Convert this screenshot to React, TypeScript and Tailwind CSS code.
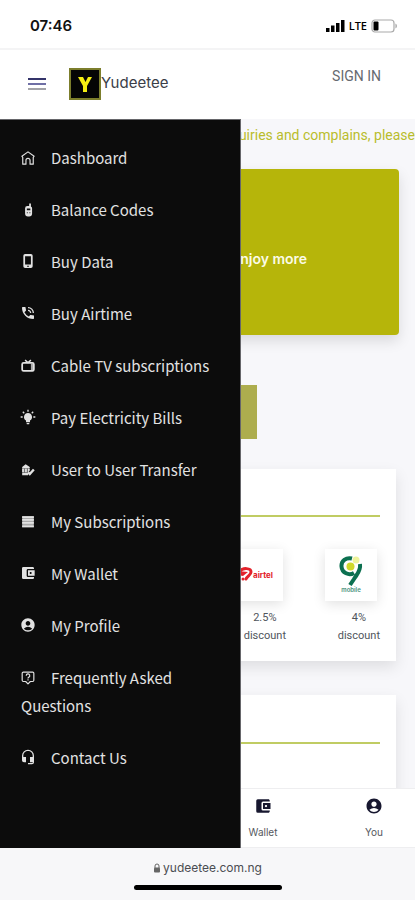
import type { ReactNode } from "react";
import { MdAccountBalanceWallet, MdAccountCircle, MdHeadsetMic, MdPhoneInTalk } from "react-icons/md";

function Glyph({ children, className = "h-3.5 w-3.5" }: { children: ReactNode; className?: string }) {
  return (
    <svg viewBox="0 0 24 24" fill="currentColor" aria-hidden="true" className={className}>
      {children}
    </svg>
  );
}

const stroke = { fill: "none", stroke: "currentColor", strokeWidth: 2 };
const padded = "-mx-px h-4 w-4";

const menu: { label: string; icon: ReactNode }[] = [
  {
    label: "Dashboard",
    icon: (
      <Glyph>
        <path {...stroke} strokeLinejoin="round" d="M3 22.500V11L1.500 9 12 1.500 22.500 9 21 11v11.500h-5.500V16a3.500 3.500 0 0 0-7 0v6.500z" />
      </Glyph>
    ),
  },
  {
    label: "Balance Codes",
    icon: (
      <Glyph>
        <path fillRule="evenodd" d="M14 1h3v5a3 3 0 0 1 2 3v9a5 5 0 0 1-5 5h-2a5 5 0 0 1-5-5V9a4 4 0 0 1 4-4h3zM10 9.500v3h6v-3zM10 16v1.500h1.500V16zm4.500 0v1.500H16V16z" />
      </Glyph>
    ),
  },
  {
    label: "Buy Data",
    icon: (
      <Glyph className="h-4 w-3.5">
        <path fillRule="evenodd" d="M7 0h10a3 3 0 0 1 3 3v18a3 3 0 0 1-3 3H7a3 3 0 0 1-3-3V3a3 3 0 0 1 3-3zM7 4v14h10V4zM10.500 20v2h3v-2z" />
      </Glyph>
    ),
  },
  { label: "Buy Airtime", icon: <MdPhoneInTalk className={padded} /> },
  {
    label: "Cable TV subscriptions",
    icon: (
      <Glyph>
        <rect {...stroke} strokeWidth={3} x="2" y="6.500" width="20" height="14" rx="2.500" />
        <path {...stroke} strokeWidth={2.500} d="M7 2l5 4 5-4" />
        <path d="M17 8h4v11h-4z" opacity=".75" />
      </Glyph>
    ),
  },
  {
    label: "Pay Electricity Bills",
    icon: (
      <Glyph className="-mx-px h-4 w-4">
        <path d="M12 6a6 6 0 0 1 3 11.200V19a1 1 0 0 1-1 1h-4a1 1 0 0 1-1-1v-1.800A6 6 0 0 1 12 6m2 15v1a1 1 0 0 1-1 1h-2a1 1 0 0 1-1-1v-1zm6-10h3v2h-3zM1 11h3v2H1zM13 1v3h-2V1zM4.900 3.500l2.200 2.200-1.500 1.400-2.100-2.200zm12 2.200 2.200-2.200 1.400 1.400-2.100 2.200z" />
      </Glyph>
    ),
  },
  {
    label: "User to User Transfer",
    icon: (
      <Glyph>
        <path d="M2 7l6-5 7 5v2H2zM2 10h3v6H2zm5 0h3v6H7zm5 0h3v3l-3 3zM2 17h10v4H2z" />
        <path d="M2 9h12v8H2z" opacity=".5" />
        <path {...stroke} strokeWidth={4} d="M12 16l3 3 7-8" />
      </Glyph>
    ),
  },
  {
    label: "My Subscriptions",
    icon: (
      <Glyph>
        <path opacity=".75" d="M2 2h20v19H2z" />
        <path d="M2 2h20v3H2zm0 5h20v3H2zm0 5h20v3H2zm0 6h20v3H2z" />
      </Glyph>
    ),
  },
  { label: "My Wallet", icon: <MdAccountBalanceWallet className={padded} /> },
  { label: "My Profile", icon: <MdAccountCircle className={padded} /> },
  {
    label: "Frequently Asked Questions",
    icon: (
      <Glyph>
        <path {...stroke} strokeLinejoin="round" d="M4 2h16a2 2 0 0 1 2 2v12a2 2 0 0 1-2 2h-4l-4 4-4-4H4a2 2 0 0 1-2-2V4a2 2 0 0 1 2-2z" />
        <path {...stroke} d="M9 8a3 3 0 1 1 4.500 2.500C12.500 11 12 11.500 12 13M12 14.200v2" />
      </Glyph>
    ),
  },
  { label: "Contact Us", icon: <MdHeadsetMic className={padded} /> },
];

function StatusBar() {
  return (
    <div className="flex h-[50px] shrink-0 items-center justify-between border-b-2 border-[#f4f4f5] bg-white pr-[17px] pl-[30px] pt-1">
      <span className="font-['Inter'] text-[15px] leading-5 font-semibold text-[#111]">07:46</span>
      <div className="flex items-center gap-1 text-black">
        <svg viewBox="0 0 19 12" className="h-3 w-[19px]" aria-hidden="true">
          <path d="M0 8h3.500v4H0zM5 5.500h3.500V12H5zM10 3h3.500v9H10zM15 0h3.500v12H15z" />
        </svg>
        <span className="font-['Open_Sans'] text-[11px] leading-4 font-semibold">LTE</span>
        <svg viewBox="0 0 27 14" className="h-3.5 w-[27px]" aria-hidden="true">
          <rect x="1" y="1" width="22" height="12" rx="3" fill="none" stroke="#aaa" strokeWidth="1.200" />
          <rect x="2.500" y="2.500" width="5" height="9" rx="1" />
          <path d="M24.500 4.500a3 3 0 0 1 0 5z" fill="#999" />
        </svg>
      </div>
    </div>
  );
}

function Header() {
  return (
    <header className="flex h-[69px] shrink-0 items-center bg-white pr-[34px] pb-0.5 pl-7">
      <button type="button" aria-label="Menu" className="flex w-[18px] flex-col gap-[3px]">
        <span className="h-0.5 bg-[#34346a]" />
        <span className="h-0.5 bg-[#6f6fa5]" />
        <span className="h-0.5 bg-[#a3a3a8]" />
      </button>
      <a href="#home" className="ml-[23px] flex items-center">
        <svg viewBox="0 0 32 32" className="h-8 w-8" aria-hidden="true">
          <rect x="1" y="1" width="30" height="30" fill="#050505" stroke="#7c7e2c" strokeWidth="2" />
          <path d="M9 9h5l2.500 5L19 9h4l-5 9v6h-4v-6z" fill="#f4ee12" />
        </svg>
        <span className="pb-0.5 font-['Inter'] text-[15px] leading-5 text-[#3b3e48]">Yudeetee</span>
      </a>
      <a href="#sign-in" className="mb-4 ml-auto font-['Roboto'] text-sm leading-5 text-[#666a70]">
        SIGN IN
      </a>
    </header>
  );
}

function Offer({ discount, children }: { discount: string; children: ReactNode }) {
  return (
    <li className="flex w-[55px] flex-col">
      <div className="flex h-[52px] w-[52px] items-center justify-center bg-white shadow-[0_3px_12px_rgba(0,0,0,0.12)]">
        {children}
      </div>
      <p className="mt-2 self-end text-center font-['Roboto'] text-[11px] leading-[18px] text-[#50555c]">
        {discount}
        <br />
        discount
      </p>
    </li>
  );
}

function AirtelLogo() {
  return (
    <svg viewBox="0 0 44 16" className="h-4 w-11" role="img" aria-label="airtel">
      <path d="M4 5C8 0 16 1 16 5c0 3-4 4-5 7" fill="none" stroke="#e3222b" strokeWidth="3" strokeLinecap="round" />
      <path d="M3 4l10 1-5 4-5-1z" fill="#e3222b" />
      <circle cx="8" cy="12" r="1.500" fill="#e3222b" />
      <text x="18" y="11" fontSize="8" fontWeight="700" fontFamily="Inter, sans-serif" fill="#e3222b">
        airtel
      </text>
    </svg>
  );
}

function NineMobileLogo() {
  return (
    <svg viewBox="0 0 26 38" className="h-[38px] w-[26px]" role="img" aria-label="9mobile">
      <path d="M14 2.500C8 1 3 5 3.500 10.500 4 17 11 20 16 17" fill="none" stroke="#0c7050" strokeWidth="4" />
      <path d="M22 8c1 7-3 10-6 15l-4 6" fill="none" stroke="#0c7050" strokeWidth="4" />
      <circle cx="18" cy="4" r="3.500" fill="#eef39b" />
      <circle cx="12.500" cy="10.500" r="4" fill="#cfd92a" />
      <text x="13" y="36" textAnchor="middle" fontSize="6" fontWeight="600" fontFamily="Inter, sans-serif" fill="#4a917c">
        mobile
      </text>
    </svg>
  );
}

function Tab({ label, icon }: { label: string; icon: ReactNode }) {
  return (
    <a href={`#${label.toLowerCase()}`} className="flex w-[42px] flex-col items-center gap-2 text-[#17172f]">
      {icon}
      <span className="font-['Inter'] text-[10px] leading-[18px] text-[#55585e]">{label}</span>
    </a>
  );
}

const card = "mx-[19px] bg-white px-4 shadow-[0_6px_14px_rgba(0,0,0,0.10)]";

export default function App() {
  return (
    <div className="flex h-screen flex-col overflow-hidden bg-[#f7f7fa]">
      <StatusBar />
      <Header />
      <div className="relative flex min-h-0 flex-1 flex-col">
        <main className="min-h-0 flex-1 overflow-hidden">
          <p className="flex h-[50px] justify-end pt-1.5 font-['Roboto'] text-sm leading-5 whitespace-nowrap text-[#b9bd2c]">
            For enquiries and complains, please
          </p>
          <section className="mx-4 flex h-[166px] items-center justify-center rounded bg-[#b6b50a] pt-3.5 shadow-[0_6px_14px_rgba(0,0,0,0.12)]">
            <h2 className="font-['Inter'] text-sm font-semibold text-[#fbfbe6]">Create account to enjoy more</h2>
          </section>
          <div className="flex justify-center pt-[50px]">
            <button type="button" aria-label="Sign up" className="h-[54px] w-[99px] bg-[#adad4e]" />
          </div>
          <section className={`${card} mt-[30px] h-48`}>
            <div className="h-12 border-b-2 border-[#c0cc63]" />
            <ul className="flex justify-end gap-[39px] pt-8">
              <Offer discount="2.5%"><AirtelLogo /></Offer>
              <Offer discount="4%"><NineMobileLogo /></Offer>
            </ul>
          </section>
          <section className={`${card} mt-[34px] h-48`}>
            <div className="h-[49px] border-b-2 border-[#c0cc63]" />
          </section>
        </main>
        <nav aria-label="Tabs" className="flex h-[60px] shrink-0 justify-end gap-[69px] border-y border-[#eeeef0] bg-white px-5 pt-2">
          <Tab label="Wallet" icon={<MdAccountBalanceWallet className="h-[18px] w-[18px]" />} />
          <Tab label="You" icon={<MdAccountCircle className="h-[18px] w-[18px]" />} />
        </nav>
        <aside className="absolute inset-y-0 left-0 w-[241px] border-t border-r border-[#66666a] bg-[#0c0c0c] pt-3">
          <ul>
            {menu.map(({ label, icon }) => (
              <li key={label} className="py-3 pr-4 pl-[21px]">
                <a href="#menu" className="block font-['Noto_Sans_CJK_SC','Noto_Sans',sans-serif] text-[15px] leading-7 text-[#e2e2e2]">
                  <span className="mr-4 inline-flex h-4 w-3.5 items-center justify-center align-[-1px] [&>svg]:shrink-0">{icon}</span>
                  {label}
                </a>
              </li>
            ))}
          </ul>
        </aside>
      </div>
      <footer className="flex h-[52px] shrink-0 flex-col items-center bg-[#f7f7f9] pt-2.5">
        <p className="flex items-center gap-0.5 font-['Inter'] text-xs leading-5 text-[#4b4d52]">
          <svg viewBox="0 0 8 10" className="h-2.5 w-2" aria-hidden="true">
            <path d="M2 5V3a2 2 0 0 1 4 0v2" fill="none" stroke="#666" />
            <rect x="1" y="4.500" width="6" height="5" rx="1" fill="#666" />
          </svg>
          yudeetee.com.ng
        </p>
        <span className="mt-[7px] h-[5px] w-[148px] rounded-full bg-black" />
      </footer>
    </div>
  );
}
